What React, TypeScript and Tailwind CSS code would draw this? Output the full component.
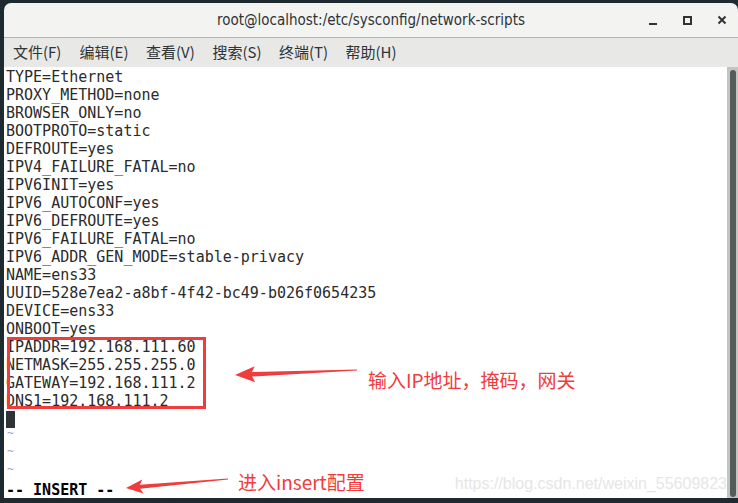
import React from "react";

const lines = [
  "TYPE=Ethernet",
  "PROXY_METHOD=none",
  "BROWSER_ONLY=no",
  "BOOTPROTO=static",
  "DEFROUTE=yes",
  "IPV4_FAILURE_FATAL=no",
  "IPV6INIT=yes",
  "IPV6_AUTOCONF=yes",
  "IPV6_DEFROUTE=yes",
  "IPV6_FAILURE_FATAL=no",
  "IPV6_ADDR_GEN_MODE=stable-privacy",
  "NAME=ens33",
  "UUID=528e7ea2-a8bf-4f42-bc49-b026f0654235",
  "DEVICE=ens33",
  "ONBOOT=yes",
  "IPADDR=192.168.111.60",
  "NETMASK=255.255.255.0",
  "GATEWAY=192.168.111.2",
  "DNS1=192.168.111.2",
];

const menus = ["文件(F)", "编辑(E)", "查看(V)", "搜索(S)", "终端(T)", "帮助(H)"];

type P = [number, number];

// tapered screenshot-tool style arrow, from tail to tip
const arrow = (tail: P, tip: P, headLen: number, headW: number, shaftW: number) => {
  const dx = tip[0] - tail[0];
  const dy = tip[1] - tail[1];
  const len = Math.hypot(dx, dy);
  const d = [dx / len, dy / len];
  const n = [-d[1], d[0]];
  const b = [tip[0] - d[0] * headLen, tip[1] - d[1] * headLen];
  const w = [b[0] - d[0] * 3, b[1] - d[1] * 3];
  const pts = [
    tip,
    [w[0] + n[0] * headW, w[1] + n[1] * headW],
    [b[0] + n[0] * shaftW, b[1] + n[1] * shaftW],
    [tail[0] + n[0] * 0.6, tail[1] + n[1] * 0.6],
    [tail[0] - n[0] * 0.6, tail[1] - n[1] * 0.6],
    [b[0] - n[0] * shaftW, b[1] - n[1] * shaftW],
    [w[0] - n[0] * headW, w[1] - n[1] * headW],
  ];
  return pts.map((p) => `${p[0].toFixed(1)},${p[1].toFixed(1)}`).join(" ");
};

const mono = { fontFamily: '"DejaVu Sans Mono", "Liberation Mono", monospace' };
const cjk = { fontFamily: '"Noto Sans CJK SC", "Noto Sans", sans-serif' };

export default function App() {
  return (
    <div className="relative w-[738px] h-[503px] bg-[#1d2a30] pt-[3px] pl-[4px] pb-[5px] flex overflow-hidden">
      <div className="flex-1 flex flex-col rounded-t-[7px] overflow-hidden">
        {/* header bar */}
        <div className="h-[35px] shrink-0 bg-[#f3f3f2] border-b border-[#b3b3b0] flex items-center relative">
          <div
            className="flex-1 text-center text-[15px] text-[#2e3436]"
            style={{ fontFamily: '"DejaVu Sans Condensed", Roboto, sans-serif', fontStretch: "condensed" }}
          >
            root@localhost:/etc/sysconfig/network-scripts
          </div>
          <div className="absolute right-0 top-0 h-full flex items-center">
            <div className="w-[35px] h-full flex items-center justify-center">
              <div className="w-[8px] h-[2px] bg-[#2e3436] mt-[8px]" />
            </div>
            <div className="w-[35px] h-full flex items-center justify-center">
              <div className="w-[9px] h-[9px] border-2 border-[#2e3436]" />
            </div>
            <div className="w-[33px] h-full flex items-center justify-center">
              <svg width="10" height="10" viewBox="0 0 10 10">
                <path d="M1.5 1.5 L8.5 8.5 M8.5 1.5 L1.5 8.5" stroke="#2e3436" strokeWidth="2" />
              </svg>
            </div>
          </div>
        </div>

        {/* menu bar */}
        <div className="h-[29px] shrink-0 bg-[#e8e8e7] flex items-center pl-[9px]" style={cjk}>
          {menus.map((m) => (
            <div key={m} className="w-[66.5px] text-[15px] text-[#2e3436]">
              {m}
            </div>
          ))}
        </div>

        {/* terminal */}
        <div className="flex-1 flex min-h-0">
          <div className="flex-1 bg-white pl-[2px] pt-[1px] overflow-hidden text-[15px] leading-[18px] text-[#2b2b2b]" style={mono}>
            {lines.map((l) => (
              <div key={l} className="h-[18px] whitespace-pre">
                {l}
              </div>
            ))}
            <div className="h-[18px] flex items-center">
              <div className="w-[9px] h-[17px] bg-[#2e3436]" />
            </div>
            {[0, 1, 2].map((i) => (
              <div key={i} className="h-[18px] text-[#86a2d2] text-[11px] leading-[12px] pl-[1px]">
                ~
              </div>
            ))}
            <div className="h-[16px] leading-[16px] whitespace-pre font-bold text-black">-- INSERT --</div>
          </div>
          <div className="w-[11px] bg-[#c4c4c2] flex justify-center pt-[3px] pb-[1px]">
            <div className="w-[6px] h-full rounded-[3px] bg-[#545b5b]" />
          </div>
        </div>
      </div>

      {/* annotations */}
      <div className="absolute left-[7px] top-[337px] w-[199px] h-[72px] border-[3px] border-[#f03c3c]" />
      <svg className="absolute inset-0" width="738" height="503">
        <polygon points={arrow([357, 370], [235, 375], 17, 8, 2.2)} fill="#f03c3c" />
        <polygon points={arrow([228, 479], [126, 488], 14, 7, 2)} fill="#f03c3c" />
      </svg>
      <div className="absolute left-[368px] top-[368px] text-[19px] leading-[24px] text-[#f03c3c] whitespace-nowrap" style={cjk}>
        输入IP地址，掩码，网关
      </div>
      <div className="absolute left-[238px] top-[470px] text-[19px] leading-[24px] text-[#f03c3c] whitespace-nowrap" style={cjk}>
        进入insert配置
      </div>
      <div
        className="absolute right-[11px] top-[475px] text-[16px] leading-[18px] text-[#e6e6e6] whitespace-nowrap"
        style={{ fontFamily: '"Liberation Sans", Arial, sans-serif' }}
      >
        https://blog.csdn.net/weixin_55609823
      </div>
    </div>
  );
}
